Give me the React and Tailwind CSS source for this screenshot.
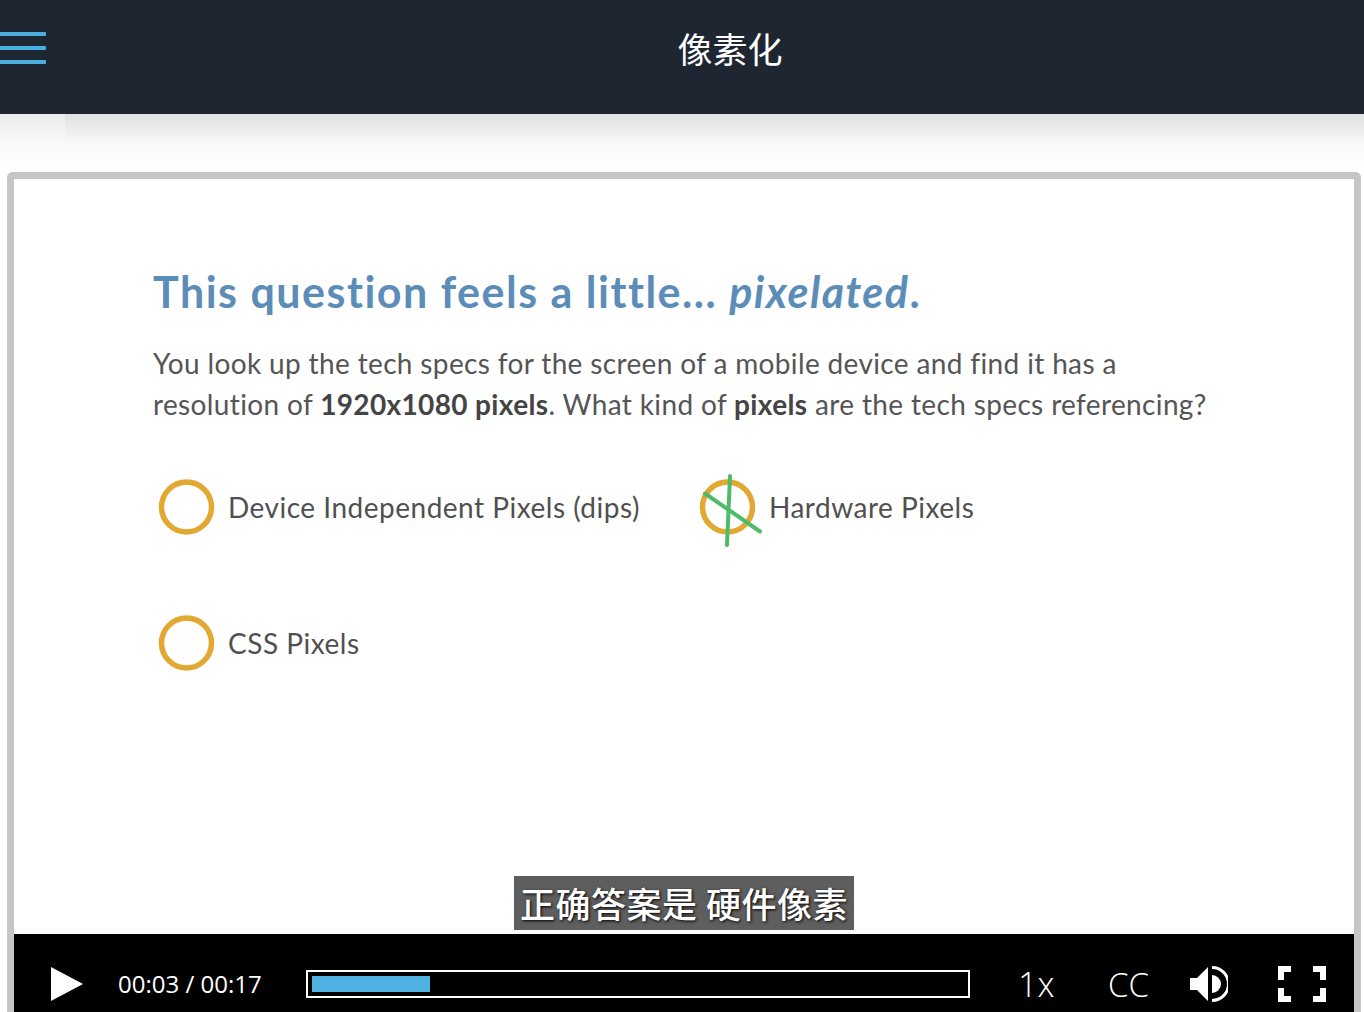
import React from "react";

function Ring({ crossed }) {
  return (
    <svg width="68" height="76" viewBox="0 0 68 76" className="shrink-0 overflow-visible">
      <circle cx="29.5" cy="38" r="25" fill="none" stroke="#e2a832" strokeWidth="5.5" />
      {crossed && (
        <g stroke="#4dbb68" strokeWidth="4" strokeLinecap="round">
          <path d="M32 7 L29 76" />
          <path d="M7 24.5 L62 62.5" />
        </g>
      )}
    </svg>
  );
}

function Option({ label, crossed, w }) {
  return (
    <div className={`flex items-center gap-[3px] ${w}`}>
      <Ring crossed={crossed} />
      <span className="text-[28px] leading-[36px] tracking-[0.5px] text-[#505050]">{label}</span>
    </div>
  );
}

export default function App() {
  return (
    <div className="relative h-[1012px] w-[1364px] overflow-hidden bg-white font-['Lato','Noto_Sans',sans-serif]">
      <header className="relative flex h-[114px] items-center justify-center bg-[#1e2731]">
        <div className="absolute left-0 top-[32px] flex w-[46px] flex-col gap-[10px]">
          <div className="h-1 rounded-r-[1px] bg-[#4aaedf]" />
          <div className="h-1 rounded-r-[1px] bg-[#4aaedf]" />
          <div className="h-1 rounded-r-[1px] bg-[#4aaedf]" />
        </div>
        <h1 className="-mt-[20px] ml-[96px] font-['Noto_Sans_CJK_SC',sans-serif] text-[35px] font-normal leading-none text-white">像素化</h1>
      </header>
      <div className="flex h-[58px]">
        <div className="w-[65px] bg-gradient-to-b from-[#ececec] via-[#f9f9f9] to-white" />
        <div className="flex-1 bg-gradient-to-b from-[#e0e0e0] via-[#f8f8f8] to-white" />
      </div>
      <main className="ml-[7px] mr-[3px] flex h-[840px] flex-col rounded-t-[6px] border-x-[7px] border-t-[7px] border-[#c6c6c6]">
        <div className="flex flex-1 flex-col pl-[139px] pt-[87px]">
          <h2 className="text-[43px] font-bold leading-[52px] tracking-[1.5px] text-[#5b8db8]">
            This question feels a little... <em>pixelated</em>.
          </h2>
          <p className="mt-[25px] text-[28px] leading-[41px] tracking-[0.36px] text-[#555555]">
            You look up the tech specs for the screen of a mobile device and find it has a<br />
            resolution of <b className="text-[#444444]">1920x1080 pixels</b>. What kind of <b className="text-[#444444]">pixels</b> are the tech specs referencing?
          </p>
          <div className="ml-[4px] mt-[44px] flex">
            <Option label="Device Independent Pixels (dips)" w="w-[541px]" />
            <Option label="Hardware Pixels" crossed />
          </div>
          <div className="ml-[4px] mt-[60px] flex">
            <Option label="CSS Pixels" />
          </div>
        </div>
        <div className="relative flex h-[78px] shrink-0 items-center bg-black pt-[22px] font-['Open_Sans',sans-serif] text-white">
          <div className="absolute bottom-[82px] left-[500px] whitespace-nowrap bg-[#5e5e5e] px-[6px] font-['Noto_Sans_CJK_SC',sans-serif] text-[35px] font-medium leading-[54px] tracking-[0.5px] text-white [text-shadow:1px_1px_3px_#000]">
            正确答案是 硬件像素
          </div>
          <svg width="32" height="34" viewBox="0 0 32 34" className="ml-[37px] shrink-0">
            <path d="M0 0 L32 17 L0 34 Z" fill="#fff" />
          </svg>
          <span className="ml-[35px] w-[188px] text-[24px] leading-none">00:03 / 00:17</span>
          <div className="h-[28px] w-[664px] border-2 border-white p-1">
            <div className="h-full w-[118px] bg-[#4fb0e2]" />
          </div>
          <span className="ml-[48px] w-[90px] text-[34px] font-light leading-none">1x</span>
          <span className="w-[82px] text-[33px] font-light leading-none">CC</span>
          <svg width="38" height="36" viewBox="0 0 38 36" className="shrink-0">
            <path d="M0 12 H7 L18 1 V35 L7 24 H0 Z" fill="#fff" />
            <path d="M22 9 A9 9 0 0 1 22 27 Z" fill="#fff" />
            <path d="M22 1.5 A16.5 16.5 0 0 1 22 34.5" fill="none" stroke="#fff" strokeWidth="3" />
          </svg>
          <svg width="48" height="36" viewBox="0 0 48 36" className="ml-[50px] shrink-0" fill="#fff">
            <path d="M0 0 H13 V6 H6 V14 H0 Z" />
            <path d="M48 0 H35 V6 H42 V14 H48 Z" />
            <path d="M0 36 H13 V30 H6 V22 H0 Z" />
            <path d="M48 36 H35 V30 H42 V22 H48 Z" />
          </svg>
        </div>
      </main>
    </div>
  );
}
